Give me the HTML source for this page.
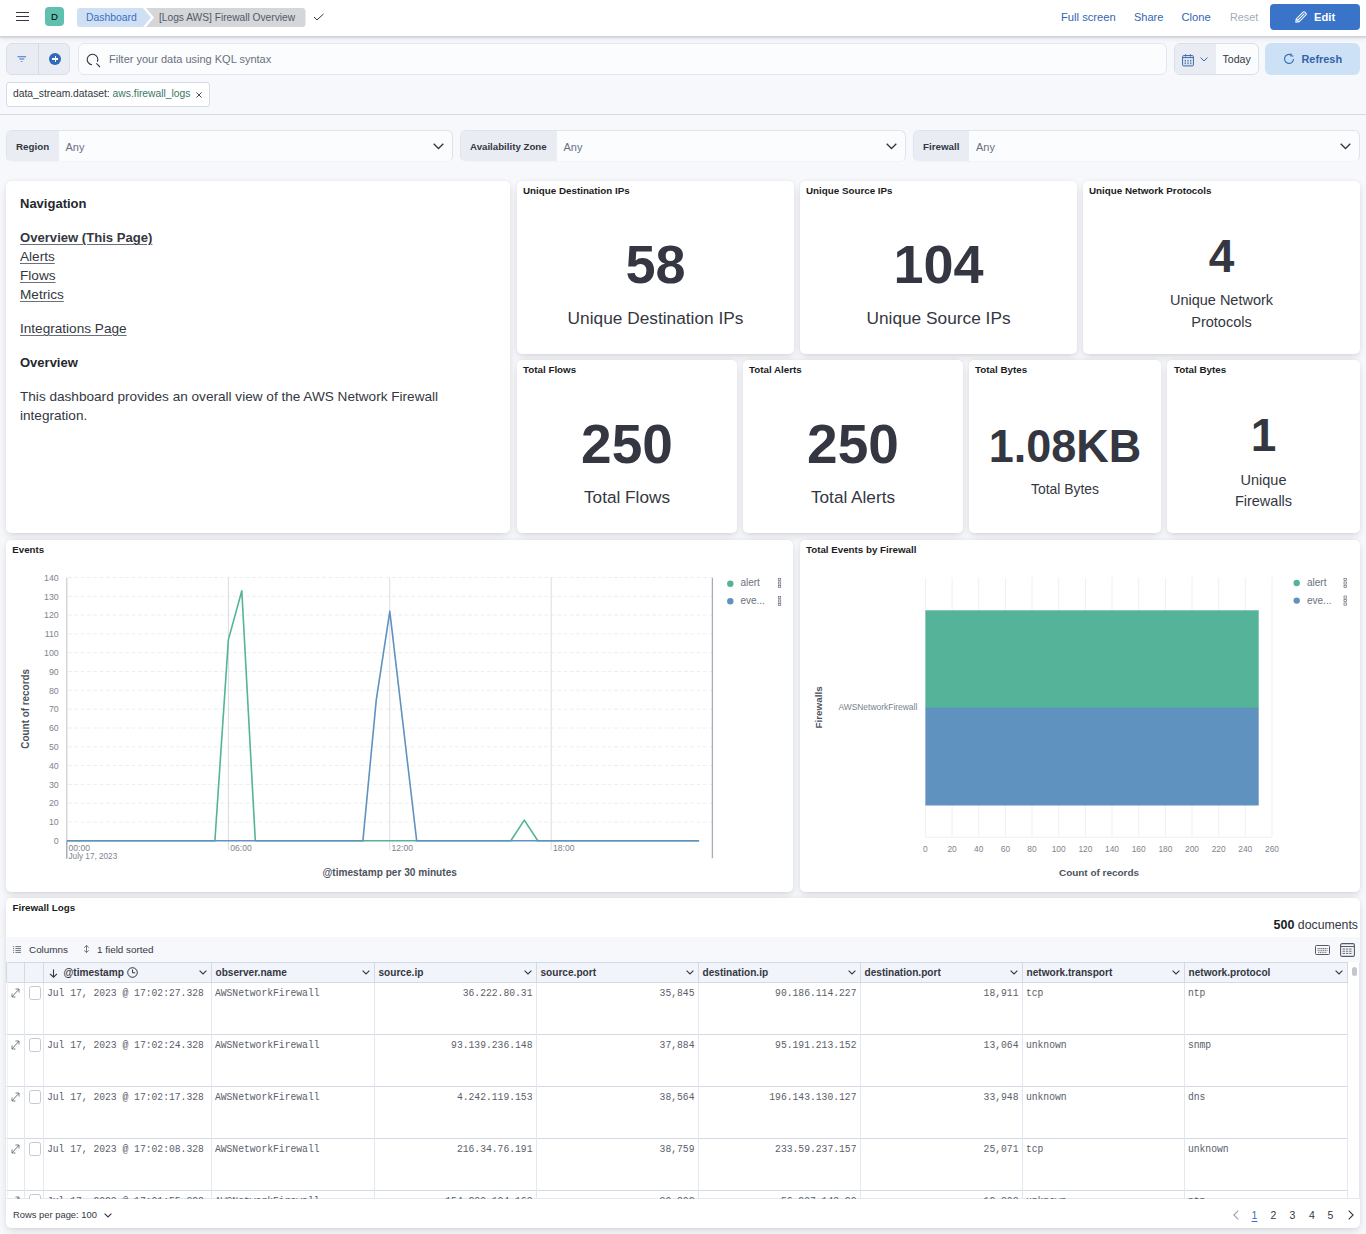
<!DOCTYPE html>
<html><head><meta charset="utf-8">
<style>
*{box-sizing:border-box;margin:0;padding:0}
html,body{width:1366px;height:1234px;overflow:hidden}
body{font-family:"Liberation Sans",sans-serif;background:#f7f8fc;color:#343741;position:relative}
.abs{position:absolute}
#hdr{left:0;top:0;width:1366px;height:37px;background:#fff;border-bottom:1px solid #ccd2de;box-shadow:0 1px 1.5px rgba(0,0,0,.10),0 2.5px 5px rgba(0,0,0,.06);z-index:5}
.panel{position:absolute;background:#fff;border-radius:5px;box-shadow:0 0.9px 4px -1px rgba(0,0,0,.08),0 2.6px 8px -1px rgba(0,0,0,.06),0 5.7px 12px -1px rgba(0,0,0,.05)}
.ptitle{position:absolute;left:7px;top:5px;font-size:9.8px;font-weight:bold;color:#1a1c21;white-space:nowrap}
.ctl{position:absolute;top:130px;height:32px;border:1px solid #dfe3ec;border-bottom-color:#f1f3f7;border-radius:6px;background:#fbfcfd;overflow:hidden}
.ctl .lab{position:absolute;left:0;top:0;bottom:0;background:#e9edf3;font-size:9.8px;font-weight:bold;color:#343741;padding:0 0 0 9px;line-height:32px;white-space:nowrap}
.ctl .any{position:absolute;top:0;line-height:32px;font-size:11px;color:#69707d}
.chev{position:absolute}

.nav{color:#343741;text-decoration:underline;text-decoration-color:#6a707a;text-decoration-thickness:1px;text-underline-offset:2px;line-height:16px;white-space:nowrap}
.big{position:absolute;text-align:center;font-weight:bold;color:#343741;line-height:1;white-space:nowrap}
.lbl{position:absolute;text-align:center;color:#343741;line-height:20px;white-space:nowrap}

.tb{font-size:9.9px;color:#343741;line-height:12px;white-space:nowrap}
.th{font-size:10.1px;font-weight:bold;color:#343741;line-height:12px;white-space:nowrap}
.td{font-family:"Liberation Mono",monospace;font-size:9.7px;color:#5a606b;line-height:11px;white-space:nowrap;transform:scaleY(1.2);transform-origin:left bottom}
</style></head>
<body>
<div id="hdr" class="abs">
  <!-- hamburger -->
  <div class="abs" style="left:16px;top:11.6px;width:13px;height:1.6px;background:#343741"></div>
  <div class="abs" style="left:16px;top:15.7px;width:13px;height:1.6px;background:#343741"></div>
  <div class="abs" style="left:16px;top:19.8px;width:13px;height:1.6px;background:#343741"></div>
  <!-- avatar -->
  <div class="abs" style="left:45px;top:7px;width:19px;height:19px;border-radius:4px;background:#60c0b0;color:#000;font-size:9.6px;text-align:center;line-height:20px">D</div>
  <!-- breadcrumbs -->
  <svg class="abs" style="left:77px;top:8px" width="230" height="19" viewBox="0 0 230 19">
    <path d="M3 0 H66 L74 9.5 L66 19 H3 A3 3 0 0 1 0 16 V3 A3 3 0 0 1 3 0Z" fill="#cfe0f4"/>
    <path d="M69 0 H225 A3.5 3.5 0 0 1 228.5 3.5 V15.5 A3.5 3.5 0 0 1 225 19 H69 L77 9.5Z" fill="#d4d6da"/>
  </svg>
  <div class="abs" style="left:86px;top:8px;line-height:19px;font-size:10.4px;color:#3a6fc0">Dashboard</div>
  <div class="abs" style="left:159px;top:8px;line-height:19px;font-size:10.2px;color:#535966">[Logs AWS] Firewall Overview</div>
  <svg class="abs" style="left:312.5px;top:12px" width="12" height="10" viewBox="0 0 12 10"><path d="M1 5 L4 7.9 L10.5 2" fill="none" stroke="#343741" stroke-width="1"/></svg>
  <!-- right links -->
  <div class="abs" style="left:1061px;top:9px;line-height:17px;font-size:11.2px;color:#3366b3">Full screen</div>
  <div class="abs" style="left:1134px;top:9px;line-height:17px;font-size:11px;color:#3366b3">Share</div>
  <div class="abs" style="left:1181.5px;top:9px;line-height:17px;font-size:11.2px;color:#3366b3">Clone</div>
  <div class="abs" style="left:1230px;top:9px;line-height:17px;font-size:10.8px;color:#a2abba">Reset</div>
  <div class="abs" style="left:1270px;top:4px;width:90px;height:26px;border-radius:4px;background:#3a74c9"></div>
  <svg class="abs" style="left:1295.2px;top:11px" width="12" height="12" viewBox="0 0 12 12"><path d="M0.8 11.2 L1.2 8.0 L8.0 1.2 A1.3 1.3 0 0 1 9.8 1.2 L10.8 2.2 A1.3 1.3 0 0 1 10.8 4.0 L4.0 10.8 Z M1.2 8.0 L4.0 10.8 M2.6 9.4 L9.4 2.6" fill="none" stroke="#fff" stroke-width="1.05" stroke-linejoin="round"/></svg>
  <div class="abs" style="left:1314px;top:8px;line-height:18px;font-size:11.2px;font-weight:bold;color:#fff">Edit</div>
</div>

<!-- query bar -->
<div class="abs" style="left:6px;top:43px;width:64px;height:32px;border:1px solid #d9dee8;border-radius:6px;background:#e9edf3"></div>
<div class="abs" style="left:38px;top:43px;width:1px;height:32px;background:#d3dae6"></div>
<svg class="abs" style="left:17px;top:56px" width="10" height="8" viewBox="0 0 10 8"><path d="M0.5 0.8 H9 M2.3 3 H7.3 M4.2 5.5 H5.3" stroke="#3a74c9" stroke-width="1.1" fill="none"/></svg>
<div class="abs" style="left:49px;top:53px;width:12px;height:12px;border-radius:50%;background:#2f6ab8"></div>
<div class="abs" style="left:54.5px;top:56px;width:1.2px;height:6px;background:#fff"></div>
<div class="abs" style="left:52px;top:58.4px;width:6px;height:1.2px;background:#fff"></div>
<div class="abs" style="left:78px;top:43px;width:1089px;height:32px;border:1px solid #e3e6ee;border-radius:6px;background:#fbfcfd"></div>
<svg class="abs" style="left:86px;top:53px" width="15" height="15" viewBox="0 0 15 15"><path d="M6.04 11.78 A5.3 5.3 0 1 1 11.3 8.74" fill="none" stroke="#343741" stroke-width="1.1"/><path d="M10.4 10.4 L14 14" stroke="#343741" stroke-width="1.1"/></svg>
<div class="abs" style="left:109px;top:51px;line-height:16px;font-size:11px;color:#69707d">Filter your data using KQL syntax</div>

<div class="abs" style="left:1174px;top:43px;width:85px;height:32px;border:1px solid #d9dee8;border-radius:6px;background:#fbfcfd;overflow:hidden"><div style="position:absolute;left:0;top:0;width:41px;height:32px;background:#e9edf3"></div></div>
<svg class="abs" style="left:1181.5px;top:54px" width="12" height="13" viewBox="0 0 12 13"><rect x="0.6" y="1.6" width="10.8" height="10.3" rx="1" fill="none" stroke="#3565ac" stroke-width="1"/><path d="M0.6 3.6 H11.4 M3.6 0.3 V2.5 M8.4 0.3 V2.5" stroke="#3565ac" stroke-width="1"/><path d="M2.6 6.3h1.4M5.3 6.3h1.4M8 6.3h1.4M2.6 8h1.4M5.3 8h1.4M8 8h1.4M2.6 9.7h1.4M5.3 9.7h1.4M8 9.7h1.4" stroke="#3565ac" stroke-width="1"/></svg>
<svg class="abs" style="left:1199.5px;top:57px" width="8" height="5" viewBox="0 0 8 5"><path d="M0.5 0.5 L4 4 L7.5 0.5" fill="none" stroke="#3565ac" stroke-width="1"/></svg>
<div class="abs" style="left:1222.5px;top:51px;line-height:16px;font-size:10.6px;color:#343741">Today</div>
<div class="abs" style="left:1265px;top:43px;width:95px;height:32px;border-radius:6px;background:#cce1f5"></div>
<svg class="abs" style="left:1283px;top:53px" width="12" height="12" viewBox="0 0 12 12"><path d="M10.5 6 A4.5 4.5 0 1 1 8.5 2.2" fill="none" stroke="#3a6fc0" stroke-width="1.2"/><path d="M8 0.5 V3 H10.5" fill="none" stroke="#3a6fc0" stroke-width="1.2"/></svg>
<div class="abs" style="left:1301.5px;top:51px;line-height:16px;font-size:10.9px;font-weight:bold;color:#3462aa">Refresh</div>

<!-- filter pill -->
<div class="abs" style="left:6px;top:82px;width:204px;height:25px;border:1px solid #d3dae6;border-radius:3px;background:#fff"></div>
<div class="abs" style="left:13px;top:87px;line-height:14px;font-size:10.3px;color:#343741;white-space:nowrap">data_stream.dataset: <span style="color:#387765">aws.firewall_logs</span></div>
<svg class="abs" style="left:195.5px;top:91.5px" width="6" height="6" viewBox="0 0 6 6"><path d="M0.4 0.4 L5.6 5.6 M5.6 0.4 L0.4 5.6" stroke="#343741" stroke-width="0.9"/></svg>
<div class="abs" style="left:0;top:114px;width:1366px;height:1px;background:#d3dae6"></div>

<!-- controls -->
<div class="ctl" style="left:6px;width:447px"><div class="lab" style="width:52px">Region</div><div class="any" style="left:58.5px">Any</div></div>
<div class="ctl" style="left:460px;width:446px"><div class="lab" style="width:96px;font-size:9.7px">Availability Zone</div><div class="any" style="left:102.5px">Any</div></div>
<div class="ctl" style="left:913px;width:447px"><div class="lab" style="width:55px">Firewall</div><div class="any" style="left:62px">Any</div></div>
<svg class="abs" style="left:433px;top:143px" width="11" height="7" viewBox="0 0 11 7"><path d="M0.7 0.7 L5.5 5.5 L10.3 0.7" fill="none" stroke="#343741" stroke-width="1.3"/></svg>
<svg class="abs" style="left:886px;top:143px" width="11" height="7" viewBox="0 0 11 7"><path d="M0.7 0.7 L5.5 5.5 L10.3 0.7" fill="none" stroke="#343741" stroke-width="1.3"/></svg>
<svg class="abs" style="left:1340px;top:143px" width="11" height="7" viewBox="0 0 11 7"><path d="M0.7 0.7 L5.5 5.5 L10.3 0.7" fill="none" stroke="#343741" stroke-width="1.3"/></svg>

<!-- PANELS -->
<div class="panel" style="left:6px;top:181px;width:504px;height:352px"></div>
<div class="panel" style="left:517px;top:181px;width:277px;height:173px"></div>
<div class="panel" style="left:800px;top:181px;width:277px;height:173px"></div>
<div class="panel" style="left:1083px;top:181px;width:277px;height:173px"></div>
<div class="panel" style="left:517px;top:360px;width:220px;height:173px"></div>
<div class="panel" style="left:743px;top:360px;width:220px;height:173px"></div>
<div class="panel" style="left:969px;top:360px;width:192px;height:173px"></div>
<div class="panel" style="left:1167px;top:360px;width:193px;height:173px"></div>
<div class="panel" style="left:6px;top:540px;width:787px;height:352px"></div>
<div class="panel" style="left:800px;top:540px;width:560px;height:352px"></div>
<div class="panel" style="left:6px;top:898px;width:1354px;height:330px"></div>


<!-- NAV PANEL content -->
<div class="abs" style="left:20px;top:196px;font-size:13px;font-weight:bold;color:#25282f;line-height:16px">Navigation</div>
<div class="abs nav" style="left:20px;top:230px;font-size:13.1px;font-weight:bold">Overview (This Page)</div>
<div class="abs nav" style="left:20px;top:249px;font-size:13.6px">Alerts</div>
<div class="abs nav" style="left:20px;top:268px;font-size:13.6px">Flows</div>
<div class="abs nav" style="left:20px;top:287px;font-size:13.6px">Metrics</div>
<div class="abs nav" style="left:20px;top:321px;font-size:13.6px">Integrations Page</div>
<div class="abs" style="left:20px;top:355px;font-size:13px;font-weight:bold;color:#25282f;line-height:16px">Overview</div>
<div class="abs" style="left:20px;top:387px;width:480px;font-size:13.6px;color:#343741;line-height:19px">This dashboard provides an overall view of the AWS Network Firewall<br>integration.</div>

<!-- METRIC PANELS -->
<div class="ptitle" style="left:523px;top:185px">Unique Destination IPs</div>
<div class="ptitle" style="left:806px;top:185px">Unique Source IPs</div>
<div class="ptitle" style="left:1089px;top:185px">Unique Network Protocols</div>
<div class="ptitle" style="left:523px;top:364px">Total Flows</div>
<div class="ptitle" style="left:749px;top:364px">Total Alerts</div>
<div class="ptitle" style="left:975px;top:364px">Total Bytes</div>
<div class="ptitle" style="left:1174px;top:364px">Total Bytes</div>

<div class="big" style="left:517px;width:277px;top:236.5px;font-size:54px">58</div>
<div class="lbl" style="left:517px;width:277px;top:308px;font-size:17.3px">Unique Destination IPs</div>
<div class="big" style="left:800px;width:277px;top:236.5px;font-size:54px">104</div>
<div class="lbl" style="left:800px;width:277px;top:308px;font-size:17.3px">Unique Source IPs</div>
<div class="big" style="left:1083px;width:277px;top:233px;font-size:46px">4</div>
<div class="lbl" style="left:1083px;width:277px;top:288.5px;font-size:14.5px;line-height:22px">Unique Network<br>Protocols</div>

<div class="big" style="left:517px;width:220px;top:416.5px;font-size:55px">250</div>
<div class="lbl" style="left:517px;width:220px;top:486.5px;font-size:17.2px">Total Flows</div>
<div class="big" style="left:743px;width:220px;top:416.5px;font-size:55px">250</div>
<div class="lbl" style="left:743px;width:220px;top:486.5px;font-size:17.2px">Total Alerts</div>
<div class="big" style="left:969px;width:192px;top:421.5px;font-size:45px;transform:scaleY(1.04);transform-origin:center top">1.08KB</div>
<div class="lbl" style="left:969px;width:192px;top:479px;font-size:13.9px">Total Bytes</div>
<div class="big" style="left:1167px;width:193px;top:412px;font-size:46px">1</div>
<div class="lbl" style="left:1167px;width:193px;top:470px;font-size:14.5px;line-height:21px">Unique<br>Firewalls</div>


<!-- CHART PANELS -->
<div class="ptitle" style="left:12.3px;top:544px;font-size:9.7px">Events</div>
<div class="ptitle" style="left:806px;top:544px;font-size:9.75px">Total Events by Firewall</div>
<svg class="abs" style="left:0;top:0;pointer-events:none;font-family:'Liberation Sans',sans-serif" width="1366" height="1234" viewBox="0 0 1366 1234">
<line x1="68" y1="822.0" x2="712" y2="822.0" stroke="#eceef3" stroke-width="1" stroke-dasharray="3.9 2.45"/>
<line x1="68" y1="803.2" x2="712" y2="803.2" stroke="#eceef3" stroke-width="1" stroke-dasharray="3.9 2.45"/>
<line x1="68" y1="784.4" x2="712" y2="784.4" stroke="#eceef3" stroke-width="1" stroke-dasharray="3.9 2.45"/>
<line x1="68" y1="765.6" x2="712" y2="765.6" stroke="#eceef3" stroke-width="1" stroke-dasharray="3.9 2.45"/>
<line x1="68" y1="746.8" x2="712" y2="746.8" stroke="#eceef3" stroke-width="1" stroke-dasharray="3.9 2.45"/>
<line x1="68" y1="728.0" x2="712" y2="728.0" stroke="#eceef3" stroke-width="1" stroke-dasharray="3.9 2.45"/>
<line x1="68" y1="709.2" x2="712" y2="709.2" stroke="#eceef3" stroke-width="1" stroke-dasharray="3.9 2.45"/>
<line x1="68" y1="690.3" x2="712" y2="690.3" stroke="#eceef3" stroke-width="1" stroke-dasharray="3.9 2.45"/>
<line x1="68" y1="671.5" x2="712" y2="671.5" stroke="#eceef3" stroke-width="1" stroke-dasharray="3.9 2.45"/>
<line x1="68" y1="652.7" x2="712" y2="652.7" stroke="#eceef3" stroke-width="1" stroke-dasharray="3.9 2.45"/>
<line x1="68" y1="633.9" x2="712" y2="633.9" stroke="#eceef3" stroke-width="1" stroke-dasharray="3.9 2.45"/>
<line x1="68" y1="615.1" x2="712" y2="615.1" stroke="#eceef3" stroke-width="1" stroke-dasharray="3.9 2.45"/>
<line x1="68" y1="596.3" x2="712" y2="596.3" stroke="#eceef3" stroke-width="1" stroke-dasharray="3.9 2.45"/>
<line x1="68" y1="577.5" x2="712" y2="577.5" stroke="#eceef3" stroke-width="1" stroke-dasharray="3.9 2.45"/>
<line x1="228.4" y1="577.7" x2="228.4" y2="850.5" stroke="#d9dce2" stroke-width="1"/>
<line x1="389.8" y1="577.7" x2="389.8" y2="850.5" stroke="#d9dce2" stroke-width="1"/>
<line x1="551.2" y1="577.7" x2="551.2" y2="850.5" stroke="#d9dce2" stroke-width="1"/>
<line x1="66.8" y1="577.7" x2="66.8" y2="841" stroke="#c9cdd4" stroke-width="1.2"/>
<line x1="66.8" y1="840.5" x2="66.8" y2="858.7" stroke="#98a2b3" stroke-width="1.3"/>
<line x1="712.4" y1="577.8" x2="712.4" y2="858.3" stroke="#a7adb7" stroke-width="1.3"/>
<text x="58.7" y="844.0" text-anchor="end" font-size="8.8" fill="#7d848f">0</text>
<text x="58.7" y="825.2" text-anchor="end" font-size="8.8" fill="#7d848f">10</text>
<text x="58.7" y="806.4" text-anchor="end" font-size="8.8" fill="#7d848f">20</text>
<text x="58.7" y="787.6" text-anchor="end" font-size="8.8" fill="#7d848f">30</text>
<text x="58.7" y="768.8" text-anchor="end" font-size="8.8" fill="#7d848f">40</text>
<text x="58.7" y="750.0" text-anchor="end" font-size="8.8" fill="#7d848f">50</text>
<text x="58.7" y="731.2" text-anchor="end" font-size="8.8" fill="#7d848f">60</text>
<text x="58.7" y="712.4" text-anchor="end" font-size="8.8" fill="#7d848f">70</text>
<text x="58.7" y="693.5" text-anchor="end" font-size="8.8" fill="#7d848f">80</text>
<text x="58.7" y="674.7" text-anchor="end" font-size="8.8" fill="#7d848f">90</text>
<text x="58.7" y="655.9" text-anchor="end" font-size="8.8" fill="#7d848f">100</text>
<text x="58.7" y="637.1" text-anchor="end" font-size="8.8" fill="#7d848f">110</text>
<text x="58.7" y="618.3" text-anchor="end" font-size="8.8" fill="#7d848f">120</text>
<text x="58.7" y="599.5" text-anchor="end" font-size="8.8" fill="#7d848f">130</text>
<text x="58.7" y="580.7" text-anchor="end" font-size="8.8" fill="#7d848f">140</text>
<text x="68.5" y="851" font-size="8.6" fill="#7d848f">00:00</text>
<text x="68.5" y="858.7" font-size="8.2" fill="#7d848f">July 17, 2023</text>
<text x="230.2" y="851" font-size="8.6" fill="#7d848f">06:00</text>
<text x="391.6" y="851" font-size="8.6" fill="#7d848f">12:00</text>
<text x="553.0" y="851" font-size="8.6" fill="#7d848f">18:00</text>
<polyline id="g1" fill="none" stroke="#54b399" stroke-width="1.6" stroke-linejoin="round" points="67.0,840.8 214.9,840.8 228.4,639.6 241.8,590.7 255.3,840.8 510.8,840.8 524.3,820.1 537.8,840.8 699.1,840.8"/>
<polyline fill="none" stroke="#6092c0" stroke-width="1.6" stroke-linejoin="round" points="67.0,840.8 362.9,840.8 376.3,699.7 389.8,611.4 416.7,840.8 699.1,840.8"/>

<circle cx="730.3" cy="583.7" r="3.2" fill="#54b399"/><circle cx="730.3" cy="601.3" r="3.2" fill="#6092c0"/>
<text x="740.4" y="586.3" font-size="10" fill="#6a717d">alert</text><text x="740.4" y="604.3" font-size="10" fill="#6a717d">eve...</text>
<rect x="778.3" y="578.4" width="2.4" height="2.2" fill="none" stroke="#69707d" stroke-width="0.7"/>
<rect x="778.3" y="581.9" width="2.4" height="2.2" fill="none" stroke="#69707d" stroke-width="0.7"/>
<rect x="778.3" y="585.4" width="2.4" height="2.2" fill="none" stroke="#69707d" stroke-width="0.7"/>
<rect x="778.3" y="596.4" width="2.4" height="2.2" fill="none" stroke="#69707d" stroke-width="0.7"/>
<rect x="778.3" y="599.9" width="2.4" height="2.2" fill="none" stroke="#69707d" stroke-width="0.7"/>
<rect x="778.3" y="603.4" width="2.4" height="2.2" fill="none" stroke="#69707d" stroke-width="0.7"/>
<text x="0" y="0" transform="translate(29,708.8) rotate(-90) scale(1,1.15)" text-anchor="middle" font-size="9.9" font-weight="bold" fill="#4d535d">Count of records</text>
<text x="389.7" y="876" text-anchor="middle" font-size="10.1" font-weight="bold" fill="#4d535d">@timestamp per 30 minutes</text>
<line x1="925.4" y1="577.6" x2="925.4" y2="836.8" stroke="#eef0f3" stroke-width="1"/>
<text x="925.4" y="851.5" text-anchor="middle" font-size="8.4" fill="#7d848f">0</text>
<line x1="952.1" y1="577.6" x2="952.1" y2="836.8" stroke="#eef0f3" stroke-width="1"/>
<text x="952.1" y="851.5" text-anchor="middle" font-size="8.4" fill="#7d848f">20</text>
<line x1="978.7" y1="577.6" x2="978.7" y2="836.8" stroke="#eef0f3" stroke-width="1"/>
<text x="978.7" y="851.5" text-anchor="middle" font-size="8.4" fill="#7d848f">40</text>
<line x1="1005.4" y1="577.6" x2="1005.4" y2="836.8" stroke="#eef0f3" stroke-width="1"/>
<text x="1005.4" y="851.5" text-anchor="middle" font-size="8.4" fill="#7d848f">60</text>
<line x1="1032.0" y1="577.6" x2="1032.0" y2="836.8" stroke="#eef0f3" stroke-width="1"/>
<text x="1032.0" y="851.5" text-anchor="middle" font-size="8.4" fill="#7d848f">80</text>
<line x1="1058.7" y1="577.6" x2="1058.7" y2="836.8" stroke="#eef0f3" stroke-width="1"/>
<text x="1058.7" y="851.5" text-anchor="middle" font-size="8.4" fill="#7d848f">100</text>
<line x1="1085.4" y1="577.6" x2="1085.4" y2="836.8" stroke="#eef0f3" stroke-width="1"/>
<text x="1085.4" y="851.5" text-anchor="middle" font-size="8.4" fill="#7d848f">120</text>
<line x1="1112.0" y1="577.6" x2="1112.0" y2="836.8" stroke="#eef0f3" stroke-width="1"/>
<text x="1112.0" y="851.5" text-anchor="middle" font-size="8.4" fill="#7d848f">140</text>
<line x1="1138.7" y1="577.6" x2="1138.7" y2="836.8" stroke="#eef0f3" stroke-width="1"/>
<text x="1138.7" y="851.5" text-anchor="middle" font-size="8.4" fill="#7d848f">160</text>
<line x1="1165.4" y1="577.6" x2="1165.4" y2="836.8" stroke="#eef0f3" stroke-width="1"/>
<text x="1165.4" y="851.5" text-anchor="middle" font-size="8.4" fill="#7d848f">180</text>
<line x1="1192.0" y1="577.6" x2="1192.0" y2="836.8" stroke="#eef0f3" stroke-width="1"/>
<text x="1192.0" y="851.5" text-anchor="middle" font-size="8.4" fill="#7d848f">200</text>
<line x1="1218.7" y1="577.6" x2="1218.7" y2="836.8" stroke="#eef0f3" stroke-width="1"/>
<text x="1218.7" y="851.5" text-anchor="middle" font-size="8.4" fill="#7d848f">220</text>
<line x1="1245.3" y1="577.6" x2="1245.3" y2="836.8" stroke="#eef0f3" stroke-width="1"/>
<text x="1245.3" y="851.5" text-anchor="middle" font-size="8.4" fill="#7d848f">240</text>
<line x1="1272.0" y1="577.6" x2="1272.0" y2="836.8" stroke="#eef0f3" stroke-width="1"/>
<text x="1272.0" y="851.5" text-anchor="middle" font-size="8.4" fill="#7d848f">260</text>
<line x1="925.4" y1="837.3" x2="1272" y2="837.3" stroke="#eef0f3" stroke-width="1"/>
<rect x="925.4" y="610.3" width="333.3" height="97.9" fill="#54b399"/>
<rect x="925.4" y="707.7" width="333.3" height="97.8" fill="#6092c0"/>
<text x="917.3" y="709.8" text-anchor="end" font-size="8.45" fill="#7a818d">AWSNetworkFirewall</text>
<text x="0" y="0" transform="translate(821.8,707.4) rotate(-90)" text-anchor="middle" font-size="9.9" font-weight="bold" fill="#4d535d">Firewalls</text>
<text x="1099" y="876" text-anchor="middle" font-size="9.95" font-weight="bold" fill="#4d535d">Count of records</text>
<circle cx="1296.7" cy="583" r="3.2" fill="#54b399"/><circle cx="1296.7" cy="600.6" r="3.2" fill="#6092c0"/>
<text x="1307" y="586.3" font-size="10" fill="#6a717d">alert</text><text x="1307" y="603.9" font-size="10" fill="#6a717d">eve...</text>
<rect x="1344" y="578.4" width="2.4" height="2.2" fill="none" stroke="#69707d" stroke-width="0.7"/>
<rect x="1344" y="581.9" width="2.4" height="2.2" fill="none" stroke="#69707d" stroke-width="0.7"/>
<rect x="1344" y="585.4" width="2.4" height="2.2" fill="none" stroke="#69707d" stroke-width="0.7"/>
<rect x="1344" y="596.0" width="2.4" height="2.2" fill="none" stroke="#69707d" stroke-width="0.7"/>
<rect x="1344" y="599.5" width="2.4" height="2.2" fill="none" stroke="#69707d" stroke-width="0.7"/>
<rect x="1344" y="603.0" width="2.4" height="2.2" fill="none" stroke="#69707d" stroke-width="0.7"/>
</svg>
<!-- TABLE -->
<div class="abs" style="left:6px;top:1198px;width:1354px;height:1px;background:#e3e8f0"></div>
<div class="abs" style="left:1359px;top:962px;width:1px;height:237px;background:#e3e8f0"></div>
<div class="ptitle" style="left:12.5px;top:902px;font-size:9.8px">Firewall Logs</div>
<div class="abs" style="right:8px;top:917.5px;font-size:12.3px;color:#343741;line-height:14px;white-space:nowrap"><b style="font-size:12.5px;color:#1a1c21">500</b> documents</div>
<div class="abs" style="left:6px;top:937px;width:1354px;height:25px;background:#f7f8fc"></div>
<svg class="abs" style="left:13.3px;top:945.8px" width="8" height="7.5" viewBox="0 0 8 7.5"><path d="M0 0.6h1.1M0 2.6h1.1M0 4.6h1.1M0 6.6h1.1M2.4 0.6H8M2.4 2.6H8M2.4 4.6H8M2.4 6.6H8" stroke="#5a606b" stroke-width="0.85"/></svg>
<div class="abs tb" style="left:29px;top:944px">Columns</div>
<svg class="abs" style="left:82.5px;top:945.3px" width="7" height="8" viewBox="0 0 7 8"><path d="M3.5 0.5V7.5M1.2 2.6L3.5 0.5L5.8 2.6M1.2 5.4L3.5 7.5L5.8 5.4" fill="none" stroke="#5a606b" stroke-width="0.85"/></svg>
<div class="abs tb" style="left:97px;top:944px">1 field sorted</div>
<svg class="abs" style="left:1314.5px;top:945px" width="15" height="10" viewBox="0 0 15 10"><rect x="0.5" y="0.5" width="14" height="9" rx="1" fill="none" stroke="#535966" stroke-width="1"/><path d="M2.5 3.5h10M2.5 5.3h10M3 7.3h9" stroke="#535966" stroke-width="0.9" stroke-dasharray="1.2 0.6"/></svg>
<svg class="abs" style="left:1339.5px;top:942.5px" width="15" height="14" viewBox="0 0 15 14"><rect x="0.6" y="0.6" width="13.8" height="12.8" rx="1.5" fill="none" stroke="#535966" stroke-width="1.1"/><path d="M0.6 3.5H14.4" stroke="#535966" stroke-width="1"/><path d="M2.5 6h10M2.5 8.2h10M2.5 10.4h10" stroke="#535966" stroke-width="0.9" stroke-dasharray="2.5 0.8"/></svg>
<div class="abs" style="left:6px;top:962px;width:1341px;height:20px;background:#f1f4fa"></div>
<div class="abs" style="left:6px;top:962px;width:1342px;height:1px;background:#d3dae6"></div>
<div class="abs" style="left:6px;top:982px;width:1342px;height:1px;background:#d3dae6"></div>
<div class="abs" style="left:6px;top:1034px;width:1342px;height:1px;background:#d3dae6"></div>
<div class="abs" style="left:6px;top:1086px;width:1342px;height:1px;background:#d3dae6"></div>
<div class="abs" style="left:6px;top:1138px;width:1342px;height:1px;background:#d3dae6"></div>
<div class="abs" style="left:6px;top:1190px;width:1342px;height:1px;background:#d3dae6"></div>
<div class="abs" style="left:6.5px;top:962px;width:1px;height:237px;background:#eef1f6"></div>
<div class="abs" style="left:24px;top:962px;width:1px;height:237px;background:#e3e8f0"></div>
<div class="abs" style="left:43px;top:962px;width:1px;height:237px;background:#e3e8f0"></div>
<div class="abs" style="left:211px;top:962px;width:1px;height:237px;background:#e3e8f0"></div>
<div class="abs" style="left:374px;top:962px;width:1px;height:237px;background:#e3e8f0"></div>
<div class="abs" style="left:536px;top:962px;width:1px;height:237px;background:#e3e8f0"></div>
<div class="abs" style="left:698px;top:962px;width:1px;height:237px;background:#e3e8f0"></div>
<div class="abs" style="left:860px;top:962px;width:1px;height:237px;background:#e3e8f0"></div>
<div class="abs" style="left:1022px;top:962px;width:1px;height:237px;background:#e3e8f0"></div>
<div class="abs" style="left:1184px;top:962px;width:1px;height:237px;background:#e3e8f0"></div>
<div class="abs" style="left:1347px;top:962px;width:1px;height:237px;background:#e3e8f0"></div>
<div class="abs" style="left:6px;top:962px;width:1px;height:20.5px;background:#d3dae6"></div>
<div class="abs" style="left:24px;top:962px;width:1px;height:20.5px;background:#d3dae6"></div>
<div class="abs" style="left:43px;top:962px;width:1px;height:20.5px;background:#d3dae6"></div>
<div class="abs" style="left:211px;top:962px;width:1px;height:20.5px;background:#d3dae6"></div>
<div class="abs" style="left:374px;top:962px;width:1px;height:20.5px;background:#d3dae6"></div>
<div class="abs" style="left:536px;top:962px;width:1px;height:20.5px;background:#d3dae6"></div>
<div class="abs" style="left:698px;top:962px;width:1px;height:20.5px;background:#d3dae6"></div>
<div class="abs" style="left:860px;top:962px;width:1px;height:20.5px;background:#d3dae6"></div>
<div class="abs" style="left:1022px;top:962px;width:1px;height:20.5px;background:#d3dae6"></div>
<div class="abs" style="left:1184px;top:962px;width:1px;height:20.5px;background:#d3dae6"></div>
<div class="abs" style="left:1347px;top:962px;width:1px;height:20.5px;background:#d3dae6"></div>
<svg class="abs" style="left:49px;top:968.5px" width="9" height="9" viewBox="0 0 9 9"><path d="M4.5 0.5V8.2M1 4.8L4.5 8.2L8 4.8" fill="none" stroke="#343741" stroke-width="1.1"/></svg>
<div class="abs th" style="left:63.5px;top:967px">@timestamp</div>
<svg class="abs" style="left:126.5px;top:967.2px" width="11" height="11" viewBox="0 0 11 11"><circle cx="5.5" cy="5.5" r="4.8" fill="none" stroke="#343741" stroke-width="1"/><path d="M5.5 2.5V5.8H8.2" fill="none" stroke="#343741" stroke-width="1"/></svg>
<svg class="abs" style="left:198.5px;top:970px" width="8" height="5" viewBox="0 0 8 5"><path d="M0.6 0.6L4 4L7.4 0.6" fill="none" stroke="#343741" stroke-width="1.1"/></svg>
<div class="abs th" style="left:215.5px;top:967px">observer.name</div>
<svg class="abs" style="left:361.5px;top:970px" width="8" height="5" viewBox="0 0 8 5"><path d="M0.6 0.6L4 4L7.4 0.6" fill="none" stroke="#343741" stroke-width="1.1"/></svg>
<div class="abs th" style="left:378.5px;top:967px">source.ip</div>
<svg class="abs" style="left:523.5px;top:970px" width="8" height="5" viewBox="0 0 8 5"><path d="M0.6 0.6L4 4L7.4 0.6" fill="none" stroke="#343741" stroke-width="1.1"/></svg>
<div class="abs th" style="left:540.5px;top:967px">source.port</div>
<svg class="abs" style="left:685.5px;top:970px" width="8" height="5" viewBox="0 0 8 5"><path d="M0.6 0.6L4 4L7.4 0.6" fill="none" stroke="#343741" stroke-width="1.1"/></svg>
<div class="abs th" style="left:702.5px;top:967px">destination.ip</div>
<svg class="abs" style="left:847.5px;top:970px" width="8" height="5" viewBox="0 0 8 5"><path d="M0.6 0.6L4 4L7.4 0.6" fill="none" stroke="#343741" stroke-width="1.1"/></svg>
<div class="abs th" style="left:864.5px;top:967px">destination.port</div>
<svg class="abs" style="left:1009.5px;top:970px" width="8" height="5" viewBox="0 0 8 5"><path d="M0.6 0.6L4 4L7.4 0.6" fill="none" stroke="#343741" stroke-width="1.1"/></svg>
<div class="abs th" style="left:1026.5px;top:967px">network.transport</div>
<svg class="abs" style="left:1171.5px;top:970px" width="8" height="5" viewBox="0 0 8 5"><path d="M0.6 0.6L4 4L7.4 0.6" fill="none" stroke="#343741" stroke-width="1.1"/></svg>
<div class="abs th" style="left:1188.5px;top:967px">network.protocol</div>
<svg class="abs" style="left:1334.5px;top:970px" width="8" height="5" viewBox="0 0 8 5"><path d="M0.6 0.6L4 4L7.4 0.6" fill="none" stroke="#343741" stroke-width="1.1"/></svg>
<div class="abs" style="left:1352px;top:966.5px;width:4.5px;height:9.5px;border-radius:3px;background:#c2c7cf"></div>
<div class="abs" style="left:0;top:982px;width:1366px;height:217px;overflow:hidden">
<svg class="abs" style="left:11px;top:6.0px" width="9" height="10" viewBox="0 0 9 10"><path d="M1 9L8 1M4.5 1H8V4.5M1 5.5V9H4.5" fill="none" stroke="#69707d" stroke-width="0.9"/></svg>
<div class="abs" style="left:28.5px;top:4.3px;width:12.5px;height:13.5px;border:1px solid #c6c9cf;border-radius:2.5px;background:#fff"></div>
<div class="abs td" style="left:46.9px;top:6.5px">Jul 17, 2023 @ 17:02:27.328</div>
<div class="abs td" style="left:214.9px;top:6.5px">AWSNetworkFirewall</div>
<div class="abs td" style="right:833.5px;top:6.5px;transform-origin:right bottom">36.222.80.31</div>
<div class="abs td" style="right:671.5px;top:6.5px;transform-origin:right bottom">35,845</div>
<div class="abs td" style="right:509.5px;top:6.5px;transform-origin:right bottom">90.186.114.227</div>
<div class="abs td" style="right:347.5px;top:6.5px;transform-origin:right bottom">18,911</div>
<div class="abs td" style="left:1025.9px;top:6.5px">tcp</div>
<div class="abs td" style="left:1187.9px;top:6.5px">ntp</div>
<svg class="abs" style="left:11px;top:58.0px" width="9" height="10" viewBox="0 0 9 10"><path d="M1 9L8 1M4.5 1H8V4.5M1 5.5V9H4.5" fill="none" stroke="#69707d" stroke-width="0.9"/></svg>
<div class="abs" style="left:28.5px;top:56.3px;width:12.5px;height:13.5px;border:1px solid #c6c9cf;border-radius:2.5px;background:#fff"></div>
<div class="abs td" style="left:46.9px;top:58.5px">Jul 17, 2023 @ 17:02:24.328</div>
<div class="abs td" style="left:214.9px;top:58.5px">AWSNetworkFirewall</div>
<div class="abs td" style="right:833.5px;top:58.5px;transform-origin:right bottom">93.139.236.148</div>
<div class="abs td" style="right:671.5px;top:58.5px;transform-origin:right bottom">37,884</div>
<div class="abs td" style="right:509.5px;top:58.5px;transform-origin:right bottom">95.191.213.152</div>
<div class="abs td" style="right:347.5px;top:58.5px;transform-origin:right bottom">13,064</div>
<div class="abs td" style="left:1025.9px;top:58.5px">unknown</div>
<div class="abs td" style="left:1187.9px;top:58.5px">snmp</div>
<svg class="abs" style="left:11px;top:110.0px" width="9" height="10" viewBox="0 0 9 10"><path d="M1 9L8 1M4.5 1H8V4.5M1 5.5V9H4.5" fill="none" stroke="#69707d" stroke-width="0.9"/></svg>
<div class="abs" style="left:28.5px;top:108.3px;width:12.5px;height:13.5px;border:1px solid #c6c9cf;border-radius:2.5px;background:#fff"></div>
<div class="abs td" style="left:46.9px;top:110.5px">Jul 17, 2023 @ 17:02:17.328</div>
<div class="abs td" style="left:214.9px;top:110.5px">AWSNetworkFirewall</div>
<div class="abs td" style="right:833.5px;top:110.5px;transform-origin:right bottom">4.242.119.153</div>
<div class="abs td" style="right:671.5px;top:110.5px;transform-origin:right bottom">38,564</div>
<div class="abs td" style="right:509.5px;top:110.5px;transform-origin:right bottom">196.143.130.127</div>
<div class="abs td" style="right:347.5px;top:110.5px;transform-origin:right bottom">33,948</div>
<div class="abs td" style="left:1025.9px;top:110.5px">unknown</div>
<div class="abs td" style="left:1187.9px;top:110.5px">dns</div>
<svg class="abs" style="left:11px;top:162.0px" width="9" height="10" viewBox="0 0 9 10"><path d="M1 9L8 1M4.5 1H8V4.5M1 5.5V9H4.5" fill="none" stroke="#69707d" stroke-width="0.9"/></svg>
<div class="abs" style="left:28.5px;top:160.3px;width:12.5px;height:13.5px;border:1px solid #c6c9cf;border-radius:2.5px;background:#fff"></div>
<div class="abs td" style="left:46.9px;top:162.5px">Jul 17, 2023 @ 17:02:08.328</div>
<div class="abs td" style="left:214.9px;top:162.5px">AWSNetworkFirewall</div>
<div class="abs td" style="right:833.5px;top:162.5px;transform-origin:right bottom">216.34.76.191</div>
<div class="abs td" style="right:671.5px;top:162.5px;transform-origin:right bottom">38,759</div>
<div class="abs td" style="right:509.5px;top:162.5px;transform-origin:right bottom">233.59.237.157</div>
<div class="abs td" style="right:347.5px;top:162.5px;transform-origin:right bottom">25,071</div>
<div class="abs td" style="left:1025.9px;top:162.5px">tcp</div>
<div class="abs td" style="left:1187.9px;top:162.5px">unknown</div>
<svg class="abs" style="left:11px;top:214.0px" width="9" height="10" viewBox="0 0 9 10"><path d="M1 9L8 1M4.5 1H8V4.5M1 5.5V9H4.5" fill="none" stroke="#69707d" stroke-width="0.9"/></svg>
<div class="abs" style="left:28.5px;top:212.3px;width:12.5px;height:13.5px;border:1px solid #c6c9cf;border-radius:2.5px;background:#fff"></div>
<div class="abs td" style="left:46.9px;top:214.5px">Jul 17, 2023 @ 17:01:55.328</div>
<div class="abs td" style="left:214.9px;top:214.5px">AWSNetworkFirewall</div>
<div class="abs td" style="right:833.5px;top:214.5px;transform-origin:right bottom">154.230.104.163</div>
<div class="abs td" style="right:671.5px;top:214.5px;transform-origin:right bottom">39,802</div>
<div class="abs td" style="right:509.5px;top:214.5px;transform-origin:right bottom">56.207.148.20</div>
<div class="abs td" style="right:347.5px;top:214.5px;transform-origin:right bottom">12,303</div>
<div class="abs td" style="left:1025.9px;top:214.5px">unknown</div>
<div class="abs td" style="left:1187.9px;top:214.5px">ntp</div>
</div>
<div class="abs" style="left:13px;top:1209px;font-size:9.4px;color:#343741;line-height:12px">Rows per page: 100</div>
<svg class="abs" style="left:103.5px;top:1213px" width="8" height="5" viewBox="0 0 8 5"><path d="M0.6 0.6L4 4L7.4 0.6" fill="none" stroke="#343741" stroke-width="1.1"/></svg>
<svg class="abs" style="left:1232.5px;top:1210px" width="6" height="10" viewBox="0 0 6 10"><path d="M5.3 0.6L0.9 5L5.3 9.4" fill="none" stroke="#98a2b3" stroke-width="1.1"/></svg>
<div class="abs" style="left:1244.5px;width:20px;text-align:center;top:1208.5px;font-size:10.5px;line-height:12px;color:#3a6fc0;text-decoration:underline;text-underline-offset:2px;">1</div>
<div class="abs" style="left:1263.5px;width:20px;text-align:center;top:1208.5px;font-size:10.5px;line-height:12px;color:#343741;">2</div>
<div class="abs" style="left:1282.5px;width:20px;text-align:center;top:1208.5px;font-size:10.5px;line-height:12px;color:#343741;">3</div>
<div class="abs" style="left:1301.8px;width:20px;text-align:center;top:1208.5px;font-size:10.5px;line-height:12px;color:#343741;">4</div>
<div class="abs" style="left:1320.5px;width:20px;text-align:center;top:1208.5px;font-size:10.5px;line-height:12px;color:#343741;">5</div>
<svg class="abs" style="left:1347.5px;top:1210px" width="6" height="10" viewBox="0 0 6 10"><path d="M0.7 0.6L5.1 5L0.7 9.4" fill="none" stroke="#343741" stroke-width="1.1"/></svg>
</body></html>
